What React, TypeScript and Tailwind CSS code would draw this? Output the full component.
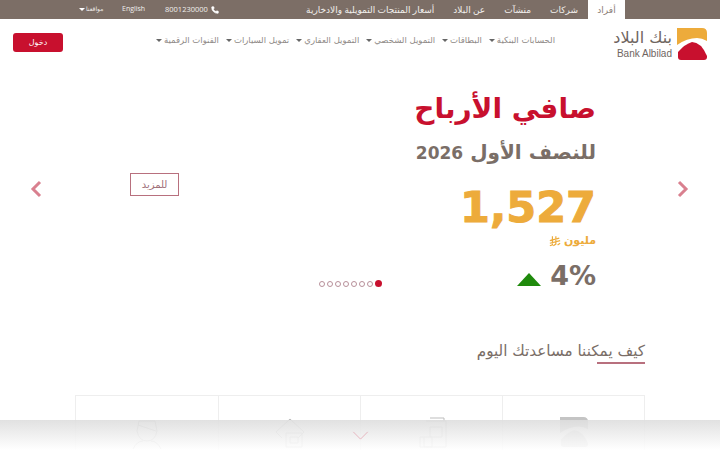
import { Phone } from 'lucide-react';

const topLinks = ['شركات', 'منشآت', 'عن البلاد', 'أسعار المنتجات التمويلية والادخارية'];
const navLinks = ['الحسابات البنكية', 'البطاقات', 'التمويل الشخصي', 'التمويل العقاري', 'تمويل السيارات', 'القنوات الرقمية'];

function Caret() {
  return <span className="inline-block w-0 h-0 border-x-[3px] border-x-transparent border-t-[3px] border-t-[#666]" />;
}

function LogoMark({ top = '#edab3b', bottom = '#c8102e', className = '' }) {
  return (
    <svg viewBox="0 0 30 32" className={className}>
      <path d="M0 0H25Q30 0 30 5V13Q25 10 20 10Q10 10 0 17Z" fill={top} />
      <path d="M1 24Q8 16 15 14Q24 14 30 28V29Q30 32 27 32H4Q1 32 1 29Z" fill={bottom} />
    </svg>
  );
}

function Riyal() {
  return (
    <svg viewBox="0 0 14 12" className="w-[12px] h-[11px]" fill="none" stroke="#edab3b" strokeWidth="1.4">
      <path d="M4 0V10L1 11M8 0V9L5 11M1 5L12 2M1 8L13 5M10 10L13 8" />
    </svg>
  );
}

function CardIcon({ kind }: { kind: number }) {
  if (kind === 0) return <LogoMark top="#c4c4c4" bottom="#d0d0d0" className="w-[28px] h-[30px]" />;
  return (
    <svg viewBox="0 0 32 32" className="w-[32px] h-[32px]" fill="none" stroke="#bdbdbd" strokeWidth="1">
      {kind === 1 && <path d="M10 4H30V30H8V20M14 1H28V4M4 20H16V30H4ZM14 10H26V20H14Z" />}
      {kind === 2 && <path d="M16 2L30 15L24 21M16 2L2 15L8 21M12 16H28V30H12ZM16 20H24V26H16Z" />}
      {kind === 3 && <path d="M8 4H24L26 14Q24 24 16 24Q8 24 6 14ZM2 32Q6 24 12 24M30 32Q26 24 20 24M7 8L25 14" />}
    </svg>
  );
}

export default function App() {
  return (
    <div
      dir="ltr"
      className="relative w-[720px] h-[450px] overflow-hidden bg-white text-[#7a6e67] font-['DejaVu_Sans',sans-serif]"
    >
      {/* Top bar */}
      <div className="flex items-center h-[19px] bg-[#7c6e66] text-[#f1eeec] pl-[79px] pr-[95px] font-['Open_Sans','DejaVu_Sans',sans-serif]">
        <span className="flex items-center gap-[1px] text-[6px] w-[43px]">
          <span className="w-0 h-0 border-x-[3px] border-x-transparent border-t-[3px] border-t-white" />
          <span dir="rtl">مواقعنا</span>
        </span>
        <span className="text-[7px] w-[43px]">English</span>
        <span className="flex items-center gap-[3px] text-[7.5px]">
          8001230000
          <Phone size={8} fill="white" stroke="white" />
        </span>
        <div dir="rtl" className="flex items-center h-full ml-auto text-[9px]">
          <span className="flex items-center justify-center w-[37px] h-full bg-white text-[#8a7d76] ml-[10px]">أفراد</span>
          <div className="flex items-center gap-[19px]">
            {topLinks.map((t) => (
              <span key={t} className="whitespace-nowrap">{t}</span>
            ))}
          </div>
        </div>
      </div>

      {/* Header */}
      <header className="flex items-start px-[13px] pt-[9px] h-[51px]">
        <button className="mt-[5px] w-[50px] h-[19px] rounded-[3px] bg-[#c8102e] text-white text-[8px]">دخول</button>
        <nav dir="rtl" className="flex items-center gap-[7px] ml-auto mr-[59px] mt-[6px] text-[8.5px] text-[#8f8a87]">
          {navLinks.map((t) => (
            <span key={t} className="flex items-center gap-[2px] whitespace-nowrap">
              {t}
              <Caret />
            </span>
          ))}
        </nav>
        <div className="flex items-start gap-[5px]">
          <div className="w-[58px] text-right leading-none">
            <div dir="rtl" className="text-[16px] leading-[19px] text-[#6f655f] whitespace-nowrap">بنك البلاد</div>
            <div className="text-[10px] leading-[13px] text-[#6f655f] whitespace-nowrap font-['Liberation_Sans',sans-serif]">Bank Albilad</div>
          </div>
          <LogoMark className="w-[30px] h-[32px]" />
        </div>
      </header>

      {/* Hero */}
      <section className="relative flex justify-between h-[260px] pl-[130px] pr-[124px] pt-[19px]">
        <a className="flex items-center justify-center self-start mt-[84px] w-[49px] h-[23px] border border-[#b8707e] text-[10px] text-[#a0707a]">للمزيد</a>
        <div dir="rtl" className="flex flex-col items-start">
          <h1 className="text-[28px] leading-[40px] font-bold text-[#c8102e]">صافي الأرباح</h1>
          <p className="flex items-baseline gap-[7px] mt-[8px] text-[20px] leading-[30px] font-semibold text-[#7a6e67]">
            للنصف الأول <span className="text-[17px] font-bold">2026</span>
          </p>
          <p className="mt-[9px] text-[43px] leading-[60px] font-bold text-[#edab3b] [-webkit-text-stroke:1px_#edab3b]">1,527</p>
          <p className="flex items-center gap-[3px] -mt-[4px] text-[11px] leading-[16px] font-semibold text-[#edab3b]">مليون <Riyal /></p>
          <p className="flex items-center gap-[9px] mt-[6px] text-[27px] leading-[42px] font-bold text-[#7a6e67]">
            <span dir="ltr">4%</span>
            <span className="w-0 h-0 border-x-[12px] border-x-transparent border-b-[13px] border-b-[#1f8a0c] mt-[6px]" />
          </p>
        </div>
        <svg viewBox="0 0 12 18" className="absolute left-[30px] top-[110px] w-[12px] h-[18px]" fill="none" stroke="#d9808f" strokeWidth="3">
          <path d="M10 2L3 9L10 16" />
        </svg>
        <svg viewBox="0 0 12 18" className="absolute left-[677px] top-[110px] w-[12px] h-[18px]" fill="none" stroke="#d9808f" strokeWidth="3">
          <path d="M2 2L9 9L2 16" />
        </svg>
        <div className="absolute left-[319px] top-[210px] flex items-center gap-[2px]">
          {[0, 1, 2, 3, 4, 5, 6].map((i) => (
            <span key={i} className="w-[6px] h-[6px] rounded-full border border-[#b8909a]" />
          ))}
          <span className="w-[7px] h-[7px] rounded-full bg-[#c8102e]" />
        </div>
      </section>

      {/* Help section */}
      <section className="px-[75px]">
        <div dir="rtl" className="flex mt-[9px] h-[56px] items-start">
          <h2 className="text-[15.2px] leading-[24px] text-[#7a6e67] relative whitespace-nowrap">
            كيف يمكننا مساعدتك اليوم
            <span className="absolute right-0 top-[23px] w-[48px] h-[2px] bg-[#b8707e]" />
          </h2>
        </div>
        <div dir="rtl" className="grid grid-cols-4 h-[120px] border border-[#eeeeee]">
          {[0, 1, 2, 3].map((k) => (
            <div key={k} className="flex justify-center pt-[21px] border-l border-[#eeeeee] last:border-l-0">
              <CardIcon kind={k} />
            </div>
          ))}
        </div>
      </section>

      {/* Scroll fade */}
      <div className="absolute left-0 right-0 bottom-0 h-[30px] flex justify-center items-center bg-gradient-to-b from-[#dedede]/90 to-white/90">
        <svg viewBox="0 0 18 10" className="w-[17px] h-[9px]" fill="none" stroke="#e5b0ba" strokeWidth="1">
          <path d="M1 1L9 9L17 1" />
        </svg>
      </div>
    </div>
  );
}
